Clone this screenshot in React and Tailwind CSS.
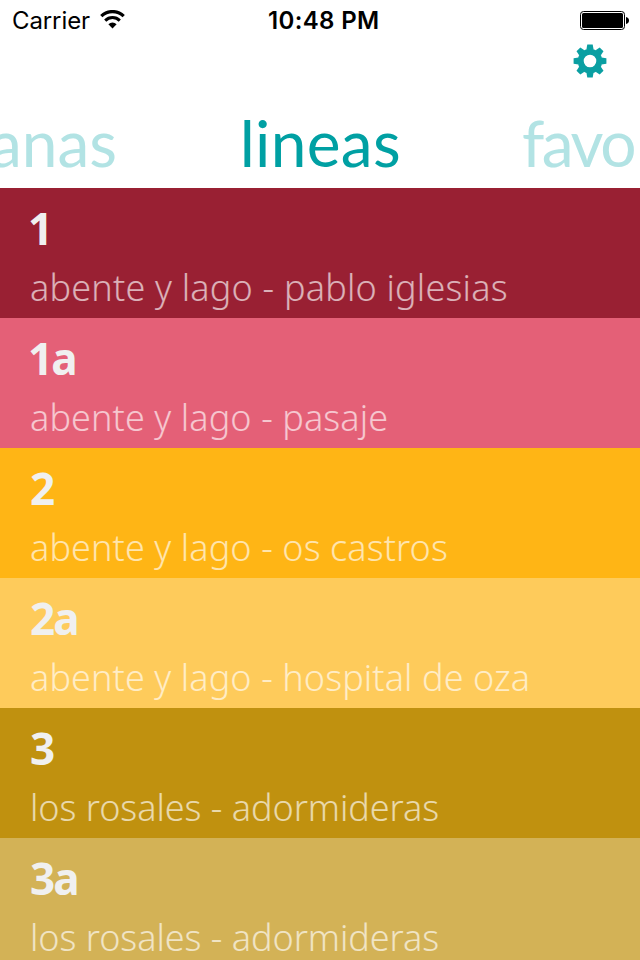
import React, { useState } from 'react';

const LINES = [
  { id: '1', route: 'abente y lago - pablo iglesias', color: 'bg-[#992033]', idClass: '-ml-[2px]', routeClass: 'tracking-[0.2px]' },
  { id: '1a', route: 'abente y lago - pasaje', color: 'bg-[#e46077]', idClass: '-ml-[2px]', routeClass: 'tracking-[0.1px]' },
  { id: '2', route: 'abente y lago - os castros', color: 'bg-[#ffb515]', idClass: '', routeClass: 'tracking-[0.1px]' },
  { id: '2a', route: 'abente y lago - hospital de oza', color: 'bg-[#fecb5b]', idClass: '', routeClass: 'tracking-[0.1px]' },
  { id: '3', route: 'los rosales - adormideras', color: 'bg-[#c0910f]', idClass: '', routeClass: 'tracking-[-0.04px]' },
  { id: '3a', route: 'los rosales - adormideras', color: 'bg-[#d3b256]', idClass: '', routeClass: 'tracking-[-0.04px]' },
];

const WifiIcon = () => (
  <svg className="w-[25px] h-[19px]" viewBox="0 0 25 19" fill="none" stroke="#000">
    <path d="M1.3 6.1 A16 16 0 0 1 23.7 6.1" strokeWidth="3.2" />
    <path d="M5.2 10.6 A10.4 10.4 0 0 1 19.8 10.6" strokeWidth="3" />
    <path d="M8.4 14.2 A6 6 0 0 1 16.6 14.2 L12.5 18.4 Z" fill="#000" stroke="none" />
  </svg>
);

const BatteryIcon = () => (
  <svg className="w-[50px] h-5" viewBox="0 0 50 20">
    <rect x="0.5" y="0.5" width="44" height="18" rx="3" fill="none" stroke="#000" />
    <rect x="2" y="2" width="41" height="15" rx="1.5" fill="#000" />
    <path d="M46 6 Q49 6.6 49 9.5 Q49 12.4 46 13 Z" fill="#000" />
  </svg>
);

const TEETH = [0, 45, 90, 135, 180, 225, 270, 315];

const GearIcon = () => (
  <svg className="w-[34px] h-[34px]" viewBox="-17 -17 34 34" fill="#0a9fa2">
    <circle r="9.3" fill="none" stroke="#0a9fa2" strokeWidth="6" />
    {TEETH.map((angle) => (
      <path key={angle} d="M-3.6 -11.5 L-2.7 -16.4 H2.7 L3.6 -11.5 Z" transform={`rotate(${angle})`} />
    ))}
  </svg>
);

const StatusBar = () => (
  <div className="h-10 shrink-0 flex items-start justify-between text-black relative font-['Inter',sans-serif] text-[24px]">
    <div className="flex items-start pl-3">
      <span className="leading-[42px] tracking-[-0.1px]">Carrier</span>
      <div className="pt-[10px] pl-[10px]"><WifiIcon /></div>
    </div>
    <span className="absolute left-[268px] font-semibold leading-[42px] tracking-[0.35px]">10:48 PM</span>
    <div className="pt-[11px] pr-[10px]"><BatteryIcon /></div>
  </div>
);

const LineRow = ({ line }) => (
  <li className={`h-[130px] shrink-0 pl-[30px] pt-[10px] ${line.color}`}>
    <div className={`h-[60px] font-['Noto_Sans',sans-serif] font-bold text-[44px] leading-[60px] text-[#f0f0f0] tracking-[-1.8px] ${line.idClass}`}>
      {line.id}
    </div>
    <div className={`h-[58px] font-['Noto_Sans',sans-serif] font-[350] text-[36px] leading-[60px] text-white/65 whitespace-nowrap ${line.routeClass}`}>
      {line.route}
    </div>
  </li>
);

export default function App() {
  const [active, setActive] = useState('lineas');

  const tabClass = (name) =>
    active === name ? 'text-[#00a0a3]' : 'text-[#b2e3e4]';

  return (
    <div className="w-[640px] h-[960px] bg-white overflow-hidden flex flex-col">
      <StatusBar />
      <header className="h-[58px] shrink-0 flex justify-end items-start pt-1 pr-[33px]">
        <button className="h-[34px]" aria-label="Settings">
          <GearIcon />
        </button>
      </header>
      <nav className="h-[90px] shrink-0 flex font-['Lato',sans-serif] text-[64px] leading-[90px] whitespace-nowrap">
        <button className={`w-[117px] shrink-0 flex justify-end ${tabClass('cercanas')}`} onClick={() => setActive('cercanas')}>
          cercanas
        </button>
        <button className={`w-[284px] shrink-0 flex justify-end tracking-[0.3px] ${tabClass('lineas')}`} onClick={() => setActive('lineas')}>
          lineas
        </button>
        <button className={`w-[239px] shrink-0 pl-[121px] flex tracking-[-2.4px] ${tabClass('favoritas')}`} onClick={() => setActive('favoritas')}>
          favo<span className="pl-2">ritas</span>
        </button>
      </nav>
      <ul className="flex flex-col">
        {LINES.map((line) => (
          <LineRow key={line.id} line={line} />
        ))}
      </ul>
    </div>
  );
}
